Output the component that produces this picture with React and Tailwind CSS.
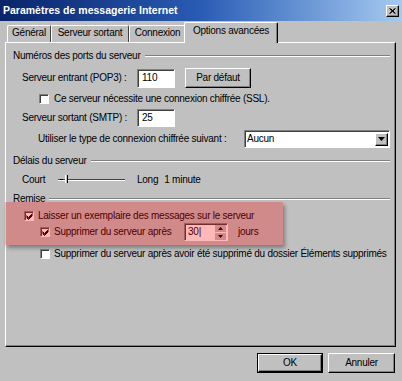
import React from "react";

const raised =
  "bg-[#c0c0c0] border border-t-white border-l-white border-r-black border-b-black shadow-[inset_-1px_-1px_0_#808080]";
const sunken =
  "bg-white border border-t-[#808080] border-l-[#808080] border-r-white border-b-white shadow-[inset_1px_1px_0_#404040]";

function Check({ checked }) {
  return (
    <div className={"w-[10px] h-[10px] shrink-0 flex items-center justify-center " + sunken}>
      {checked && (
        <svg width="7" height="7" viewBox="0 0 7 7">
          <path d="M0.5 2.5 L2.5 4.5 L6.5 0.5 M0.5 3.5 L2.5 5.5 L6.5 1.5 M0.5 4.5 L2.5 6.5 L6.5 2.5" stroke="#000" strokeWidth="1" fill="none" />
        </svg>
      )}
    </div>
  );
}

function GroupLabel({ children }) {
  return (
    <div className="flex items-center h-[14px] pr-[5px]">
      <span>{children}</span>
      <div className="flex-1 ml-[4px] h-[2px] border-t border-t-[#808080] border-b border-b-white" />
    </div>
  );
}

function Tab({ children, w, selected }) {
  if (selected) {
    return (
      <div
        className={
          "relative z-10 -mb-[1px] -ml-[2px] h-[21px] flex items-start pt-[3px] justify-center bg-[#c0c0c0] border-t border-l border-t-white border-l-white border-r border-r-black shadow-[inset_-1px_0_0_#808080] rounded-t-[2px] " +
          w
        }
      >
        {children}
      </div>
    );
  }
  return (
    <div
      className={
        "h-[17px] flex items-start pt-[2px] justify-center border-t border-l border-t-white border-l-white border-r border-r-[#404040] rounded-t-[2px] " +
        w
      }
    >
      {children}
    </div>
  );
}

function Button({ children, w, isDefault }) {
  return (
    <div className={"h-[20px] " + w + (isDefault ? " border border-black" : "")}>
      <div className={"h-full w-full flex items-center justify-center " + raised}>{children}</div>
    </div>
  );
}

export default function App() {
  return (
    <div className="w-[402px] h-[381px] overflow-hidden bg-[#c0c0c0] text-black font-['Liberation_Sans',Arial,sans-serif] text-[10px] tracking-[-0.25px] leading-none flex flex-col">
      {/* title bar */}
      <div className="h-[21px] shrink-0 flex items-center justify-between pl-[3px] pr-[3px] bg-linear-to-r from-[#0a246a] via-[#2a5cb4] to-[#a6caf0]">
        <span className="text-white font-bold text-[10.5px] tracking-normal">Paramètres de messagerie Internet</span>
        <div className={"w-[13px] h-[12px] flex items-center justify-center " + raised}>
          <svg width="7" height="6" viewBox="0 0 7 6">
            <path d="M0.5 0.5 L6 5.5 M1.5 0.5 L6.5 5.5 M6 0.5 L0.5 5.5 M6.5 0.5 L1 5.5" stroke="#000" strokeWidth="1" />
          </svg>
        </div>
      </div>

      {/* tabs */}
      <div className="h-[21px] shrink-0 flex items-end pl-[7px]">
        <Tab w="w-[44px]">Général</Tab>
        <Tab w="w-[78px]">Serveur sortant</Tab>
        <Tab w="w-[57px]">Connexion</Tab>
        <Tab w="w-[94px]" selected>
          Options avancées
        </Tab>
      </div>

      {/* panel */}
      <div className="relative mx-[5px] w-[391px] h-[305px] shrink-0 border border-t-white border-l-white border-r-black border-b-black shadow-[inset_-1px_-1px_0_#808080] pl-[7px] pt-[6px]">
        <GroupLabel>Numéros des ports du serveur</GroupLabel>

        <div className="mt-[5px] h-[20px] flex items-center pl-[9px]">
          <span className="w-[115px]">Serveur entrant (POP3) :</span>
          <div className={"w-[38px] h-[19px] flex items-center pl-[4px] " + sunken}>110</div>
          <div className="ml-[10px]">
            <Button w="w-[66px]">Par défaut</Button>
          </div>
        </div>

        <div className="mt-[4px] h-[14px] flex items-center pl-[26px]">
          <Check />
          <span className="ml-[5px]">Ce serveur nécessite une connexion chiffrée (SSL).</span>
        </div>

        <div className="mt-[3px] h-[18px] flex items-center pl-[9px]">
          <span className="w-[115px]">Serveur sortant (SMTP) :</span>
          <div className={"w-[38px] h-[18px] flex items-center pl-[4px] " + sunken}>25</div>
        </div>

        <div className="mt-[3px] h-[18px] flex items-center pl-[25px]">
          <span className="w-[206px]">Utiliser le type de connexion chiffrée suivant :</span>
          <div className={"w-[146px] h-[18px] flex items-center justify-between pl-[2px] pr-[1px] " + sunken}>
            <span>Aucun</span>
            <div className={"w-[13px] h-[13px] flex items-center justify-center " + raised}>
              <svg width="7" height="4" viewBox="0 0 7 4">
                <path d="M0 0 H7 L3.5 4 Z" fill="#000" />
              </svg>
            </div>
          </div>
        </div>

        <div className="mt-[6px]">
          <GroupLabel>Délais du serveur</GroupLabel>
        </div>

        <div className="mt-[5px] h-[14px] flex items-center pl-[9px]">
          <span className="w-[36px]">Court</span>
          <div className="relative w-[67px] h-[12px] flex items-center">
            <div className="w-full h-[2px] border-t border-t-[#404040] border-b border-b-white" />
            <div className="absolute left-[7px] top-[1px] w-[3px] h-[8px] bg-[#c0c0c0] border-l border-l-white border-r border-r-black" />
            <div className="absolute left-[2px] top-[5px] w-[3px] h-[1px] bg-black" />
          </div>
          <span className="ml-[12px]">Long</span>
          <span className="ml-[6px]">1 minute</span>
        </div>

        <div className="mt-[5px]">
          <GroupLabel>Remise</GroupLabel>
        </div>

        <div className="mt-[3px] h-[14px] flex items-center pl-[11px]">
          <Check checked />
          <span className="ml-[4px]">Laisser un exemplaire des messages sur le serveur</span>
        </div>

        <div className="h-[18px] flex items-center pl-[27px]">
          <Check checked />
          <span className="ml-[4px] w-[130px]">Supprimer du serveur après</span>
          <div className={"w-[44px] h-[18px] flex items-center justify-between pl-[3px] pr-[1px] " + sunken}>
            <span>
              30<span className="font-light">|</span>
            </span>
            <div className="flex flex-col gap-[1px]">
              <div className="w-[11px] h-[7px] flex items-center justify-center bg-[#c0c0c0]">
                <svg width="5" height="3" viewBox="0 0 5 3">
                  <path d="M0 3 H5 L2.5 0 Z" fill="#000" />
                </svg>
              </div>
              <div className="w-[11px] h-[7px] flex items-center justify-center bg-[#c0c0c0]">
                <svg width="5" height="3" viewBox="0 0 5 3">
                  <path d="M0 0 H5 L2.5 3 Z" fill="#000" />
                </svg>
              </div>
            </div>
          </div>
          <span className="ml-[10px]">jours</span>
        </div>

        <div className="mt-[6px] h-[14px] flex items-center pl-[27px]">
          <Check />
          <span className="ml-[4px]">Supprimer du serveur après avoir été supprimé du dossier Éléments supprimés</span>
        </div>

        {/* highlight overlay */}
        <div className="absolute left-[-1px] top-[159px] w-[278px] h-[43px] bg-[rgba(255,0,0,0.28)] shadow-[2px_3px_4px_rgba(0,0,0,0.35)] pointer-events-none" />
      </div>

      {/* buttons */}
      <div className="mt-[6px] flex justify-end gap-[5px] pr-[7px]">
        <Button w="w-[66px]" isDefault>
          OK
        </Button>
        <Button w="w-[67px]">Annuler</Button>
      </div>
    </div>
  );
}
